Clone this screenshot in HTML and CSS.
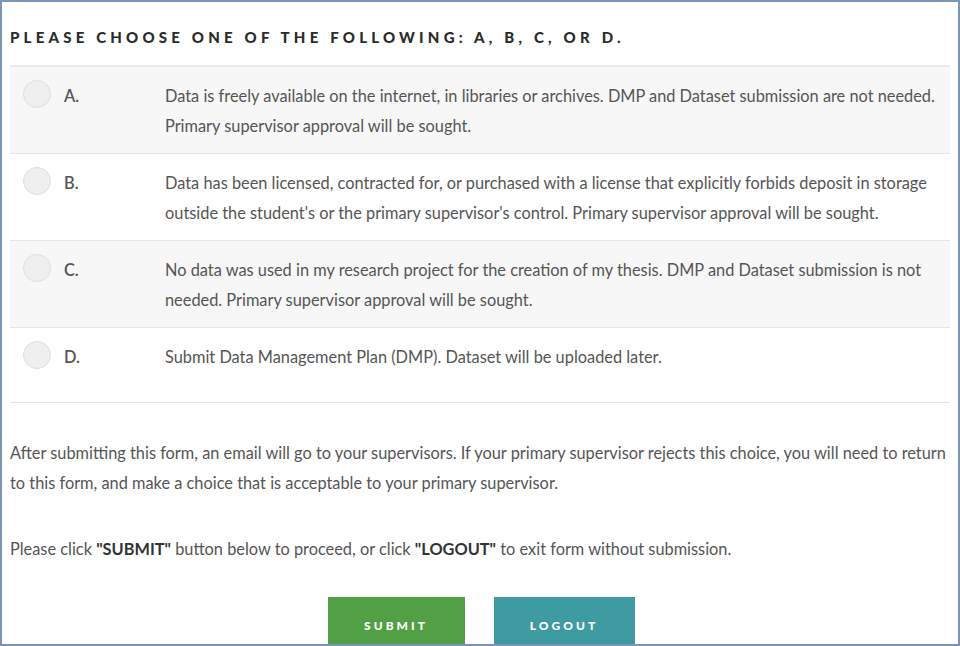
FILE: index.html
```html
<!DOCTYPE html>
<html lang="en">
<head>
<meta charset="utf-8">
<title>Choose option</title>
<link rel="stylesheet" href="styles.css">
</head>
<body>
<div class="frame">
  <h2 class="title">Please choose one of the following: A, B, C, or D.</h2>
  <div class="options">
    <label class="option shaded">
      <span class="radio"></span>
      <span class="letter">A.</span>
      <span class="desc">Data is freely available on the internet, in libraries or archives. DMP and Dataset submission are not needed.<br>Primary supervisor approval will be sought.</span>
    </label>
    <label class="option">
      <span class="radio"></span>
      <span class="letter">B.</span>
      <span class="desc">Data has been licensed, contracted for, or purchased with a license that explicitly forbids deposit in storage<br>outside the student's or the primary supervisor's control. Primary supervisor approval will be sought.</span>
    </label>
    <label class="option shaded">
      <span class="radio"></span>
      <span class="letter">C.</span>
      <span class="desc">No data was used in my research project for the creation of my thesis. DMP and Dataset submission is not<br>needed. Primary supervisor approval will be sought.</span>
    </label>
    <label class="option single">
      <span class="radio"></span>
      <span class="letter">D.</span>
      <span class="desc">Submit Data Management Plan (DMP). Dataset will be uploaded later.</span>
    </label>
  </div>
  <p class="note">After submitting this form, an email will go to your supervisors. If your primary supervisor rejects this choice, you will need to return<br>to this form, and make a choice that is acceptable to your primary supervisor.</p>
  <p class="note second">Please click <b>"SUBMIT"</b> button below to proceed, or click <b>"LOGOUT"</b> to exit form without submission.</p>
  <div class="actions">
    <button class="btn submit" type="button">Submit</button>
    <button class="btn logout" type="button">Logout</button>
  </div>
</div>
</body>
</html>
```

FILE: styles.css
```css
* { box-sizing: border-box; }
html, body { margin: 0; padding: 0; background: #fff; }
body { font-family: "Lato", "Noto Sans", sans-serif; }

.frame {
  width: 960px;
  height: 646px;
  overflow: hidden;
  border: 2px solid #7a96b4;
  padding: 0 8px 0 8px;
  background: #fff;
}

.title {
  margin: 0;
  padding-top: 25px;
  height: 63px;
  font-family: "Lato", sans-serif;
  font-weight: 900;
  font-size: 15px;
  line-height: 20px;
  letter-spacing: 4.2px;
  text-transform: uppercase;
  color: #2b2b2b;
  white-space: nowrap;
}

.options {
  border-top: 2px solid #e9e9e9;
}

.option {
  display: grid;
  grid-template-columns: 54px 101px 1fr;
  padding: 14px 0 12px 0;
  border-bottom: 1px solid #e4e4e4;
  font-size: 16.35px;
  line-height: 30px;
  color: #555;
}
.option.shaded { background: #f7f7f7; }
.option.single { padding-bottom: 30px; }

.radio {
  width: 28px;
  height: 28px;
  margin: -1px 0 0 13px;
  border-radius: 50%;
  border: 1px solid #dedede;
  background: #efefef;
}

.letter { color: #555; font-weight: 600; }
.desc { color: #555; white-space: nowrap; }

.note {
  margin: 35px 0 0 0;
  font-size: 16.35px;
  line-height: 30px;
  color: #555;
  white-space: nowrap;
}
.note.second { margin-top: 36px; }
.note b { color: #333; font-weight: 700; }

.actions {
  display: flex;
  justify-content: center;
  gap: 29px;
  margin-top: 33px;
  padding-left: 2px;
}

.btn {
  border: 0;
  height: 58px;
  padding: 0 0 2px 0;
  font-family: "Lato", sans-serif;
  font-weight: 900;
  font-size: 12px;
  letter-spacing: 3px;
  text-transform: uppercase;
  color: #fff;
  cursor: pointer;
}
.btn.submit { width: 137px; background: #52a045; }
.btn.logout { width: 141px; background: #3f9ba2; }
```
